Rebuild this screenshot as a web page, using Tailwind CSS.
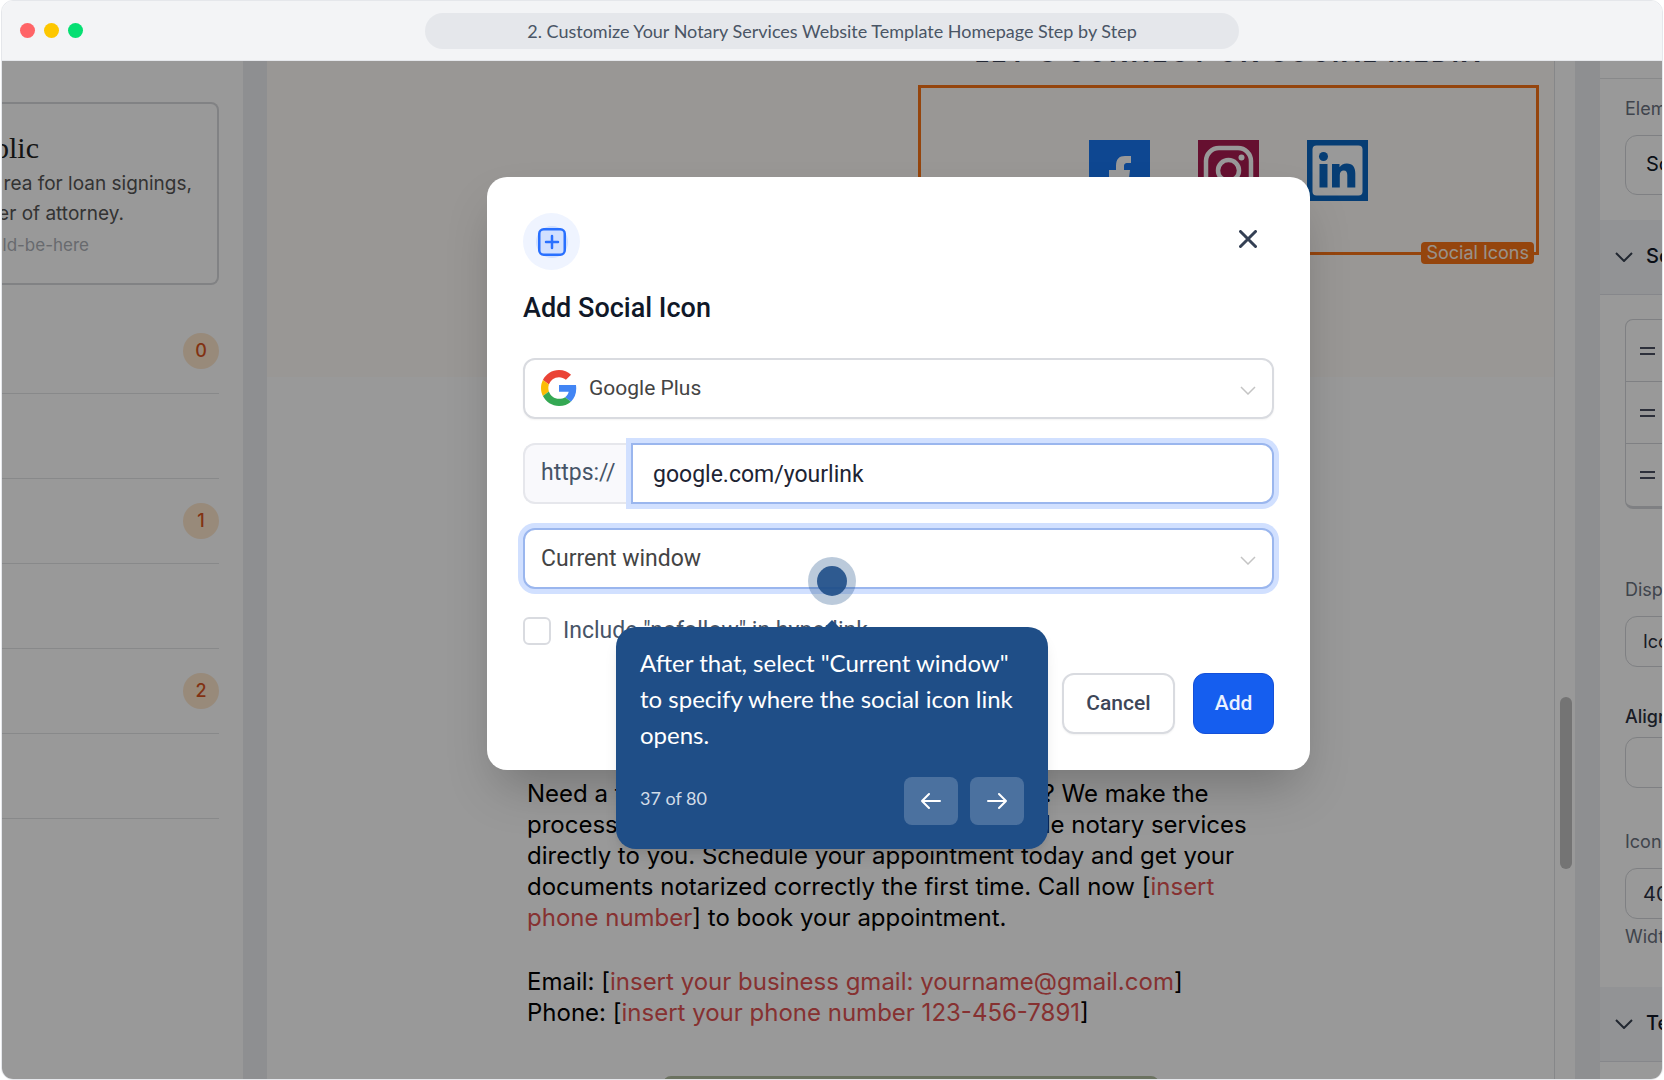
<!DOCTYPE html>
<html lang="en">
<head>
  <meta charset="UTF-8">
  <meta name="viewport" content="width=device-width, initial-scale=1.0">
  <title>Customize Your Notary Services Website Template</title>
  <script src="https://cdn.jsdelivr.net/npm/@tailwindcss/browser@4"></script>
</head>
<body class="h-screen bg-white px-px font-['Inter',sans-serif]">
  <div class="h-full flex flex-col rounded-xl border border-gray-200 overflow-hidden">

    <!-- Window bar -->
    <header class="relative h-[60px] shrink-0 flex items-center justify-center bg-gray-100 border-b border-gray-200">
      <div class="absolute left-[18px] flex gap-[9px]">
        <span class="size-[15px] rounded-full bg-[#ff6467]"></span>
        <span class="size-[15px] rounded-full bg-[#fdc700]"></span>
        <span class="size-[15px] rounded-full bg-[#05df72]"></span>
      </div>
      <div class="w-[49%] h-9 rounded-full bg-gray-200 flex items-center justify-center font-['Lato',sans-serif] text-lg text-gray-600">2. Customize Your Notary Services Website Template Homepage Step by Step</div>
    </header>

    <main class="relative flex-1 min-h-0 flex overflow-hidden bg-white">

      <!-- Left panel -->
      <aside class="w-[241px] shrink-0 overflow-hidden">
        <div class="mt-[41px] mr-6 h-[183px] pt-7 border-2 border-l-0 border-[#d8d9dc] rounded-r-lg overflow-hidden whitespace-nowrap">
          <div class="w-[37px] flex justify-end font-['Liberation_Serif',serif] text-[30px] leading-[32px] text-[#222]">Public</div>
          <div class="w-[190px] mt-[5px] flex justify-end text-[19px] leading-[30px] text-[#555]">rea for loan signings,</div>
          <div class="w-[122px] flex justify-end text-[19px] leading-[30px] text-[#555]">er of attorney.</div>
          <div class="w-[87px] mt-[3px] flex justify-end text-[17px] leading-[26px] text-[#adb1b8]">ld-be-here</div>
        </div>
        <ul class="mt-6 mr-6 text-lg font-medium text-[#d9541e]">
          <li class="h-[85px] border-b border-[#e3e4e6] flex items-center justify-end"><span class="size-9 rounded-full bg-[#fde6cc] flex items-center justify-center">0</span></li>
          <li class="h-[85px] border-b border-[#e3e4e6]"></li>
          <li class="h-[85px] border-b border-[#e3e4e6] flex items-center justify-end"><span class="size-9 rounded-full bg-[#fde6cc] flex items-center justify-center">1</span></li>
          <li class="h-[85px] border-b border-[#e3e4e6]"></li>
          <li class="h-[85px] border-b border-[#e3e4e6] flex items-center justify-end"><span class="size-9 rounded-full bg-[#fde6cc] flex items-center justify-center">2</span></li>
          <li class="h-[85px] border-b border-[#e3e4e6]"></li>
        </ul>
      </aside>
      <div class="w-6 shrink-0 bg-[#edeff2]"></div>

      <!-- Page preview -->
      <section class="flex-1 min-w-0 border-r border-[#e0e1e4] overflow-hidden">
        <div class="h-[316px] bg-[#fffcf8] flex justify-end pr-[15px]">
          <div class="w-[621px]">
            <h2 class="-mt-5 h-[44px] leading-[24px] text-center whitespace-nowrap text-[25px] font-bold tracking-widest text-[#3b4358]">LET'S CONNECT ON SOCIAL MEDIA</h2>
            <div class="relative h-[170px] border-3 border-[#f97316] flex justify-center gap-12 pt-[52px]">
              <svg class="size-[61px]" viewBox="0 0 61 61"><path fill="#1877f2" d="M0 0h61v61H0z"/><path fill="#fff" d="M27 61V38h-7v-8h7v-4c0-7 3-10 9-10h6v7h-3c-4 0-4 2-4 4v3h6l-1 8h-5v23z"/></svg>
              <svg class="size-[61px]" viewBox="0 0 61 61" fill="none" stroke="#fff"><path fill="#aa1c50" stroke="none" d="M0 0h61v61H0z"/><rect x="8" y="8" width="45" height="45" rx="13" stroke-width="4.500"/><circle cx="30.500" cy="30.500" r="10.500" stroke-width="4.500"/><circle cx="43.500" cy="17.500" r="3" fill="#fff" stroke="none"/></svg>
              <svg class="size-[61px]" viewBox="0 0 61 61"><path fill="#0a66c2" d="M0 0h61v61H0z"/><rect x="5.500" y="5.500" width="50" height="50" rx="4" fill="#fff"/><g fill="#0a66c2"><circle cx="16.500" cy="16.500" r="4.500"/><path d="M12.500 24h8v23.500h-8zM25 24h7.500v3.300c1.500-2.500 4-3.900 7.300-3.900 6.200 0 8.500 4 8.500 10.200v13.900h-8V35.200c0-3-1-4.800-3.500-4.800-2.700 0-4 1.800-4 4.900v12.200H25z"/></g></svg>
              <span class="absolute right-[2px] -bottom-3 h-[22px] px-[5px] rounded bg-[#f97316] text-[#fff3e6] text-lg leading-[22px]">Social Icons</span>
            </div>
          </div>
        </div>

        <div class="pl-[260px] pt-[401px] text-2xl leading-[31px] text-black whitespace-nowrap">
          <p>Need a trustworthy notary in your nearby city? We make the<br>process so simple from our professional mobile notary services<br>directly to you. Schedule your appointment today and get your<br>documents notarized correctly the first time. Call now [<span class="text-[#e05252]">insert</span><br><span class="text-[#e05252]">phone number</span>] to book your appointment.</p>
          <p class="mt-[33px]">Email: [<span class="text-[#e05252]">insert your business gmail: yourname@gmail.com</span>]<br>Phone: [<span class="text-[#e05252]">insert your phone number 123-456-7891</span>]</p>
        </div>
        <div class="mx-auto mt-12 w-[496px] h-16 rounded-lg bg-[#b2bfa0]"></div>
      </section>

      <!-- Scrollbar -->
      <div class="w-5 shrink-0 pt-[636px] pl-[5px]">
        <div class="w-3 h-[172px] rounded-full bg-[#c1c1c1]"></div>
      </div>
      <div class="w-[25px] shrink-0 bg-[#edeff2]"></div>

      <!-- Settings panel -->
      <aside class="w-[62px] shrink-0 overflow-hidden">
        <div class="w-[320px] pt-[17px] text-lg">
          <div class="border-t border-[#e3e4e6] px-[25px] pt-[19px] h-[142px]">
            <label for="element" class="block h-[22px] leading-[22px] text-[#6b7280]">Element</label>
            <select id="element" class="appearance-none mt-[15px] w-full h-[60px] pl-5 rounded-xl border border-[#d4d6da] bg-white text-[20px] text-[#111827]"><option>Social Icons</option></select>
          </div>
          <h3 class="h-[75px] pl-[15px] flex items-center gap-[13px] bg-[#f3f5f9] border-b border-[#dfe2e8] text-[20px] font-medium text-[#111827]">
            <svg class="w-[18px] h-[10px]" viewBox="0 0 18 10" fill="none" stroke="#374151" stroke-width="2"><path d="M1 1l8 8 8-8"/></svg>Social Icons
          </h3>
          <ul class="mx-[25px] mt-6 rounded-lg border border-b-3 border-[#d4d6da] overflow-hidden">
            <li class="h-[62px] pl-[14px] flex items-center border-b border-[#d4d6da]"><svg class="w-[15px] h-2" viewBox="0 0 15 8" stroke="#4b5063" stroke-width="2"><path d="M0 1h15M0 7h15"/></svg></li>
            <li class="h-[62px] pl-[14px] flex items-center border-b border-[#d4d6da]"><svg class="w-[15px] h-2" viewBox="0 0 15 8" stroke="#4b5063" stroke-width="2"><path d="M0 1h15M0 7h15"/></svg></li>
            <li class="h-[62px] pl-[14px] flex items-center"><svg class="w-[15px] h-2" viewBox="0 0 15 8" stroke="#4b5063" stroke-width="2"><path d="M0 1h15M0 7h15"/></svg></li>
          </ul>
          <div class="px-[25px] pt-[70px] h-[478px]">
            <label for="display" class="block h-[22px] leading-[22px] text-[#6b7280]">Display</label>
            <select id="display" class="appearance-none mt-[15px] w-full h-[51px] pl-[17px] rounded-xl border border-[#d4d6da] bg-white text-[#2b3040]"><option>Icons</option></select>
            <label for="align" class="block mt-[39px] h-[22px] leading-[22px] font-medium text-[#2b3040]">Alignment</label>
            <button id="align" type="button" class="block mt-[9px] w-full h-[51px] rounded-xl border border-[#d4d6da]"></button>
            <label for="width" class="block mt-[43px] h-[22px] leading-[22px] text-[#6b7280]">Icon size</label>
            <input id="width" value="40" class="block mt-[15px] w-full h-[51px] pl-[17px] rounded-xl border border-[#d4d6da] text-[20px] text-[#2b3040]">
            <p class="mt-[7px] leading-[22px] text-[#6b7280]">Width</p>
          </div>
          <h3 class="h-[75px] pl-[15px] flex items-center gap-[13px] bg-[#f3f5f9] border-b border-[#dfe2e8] text-[20px] font-medium text-[#111827]">
            <svg class="w-[18px] h-[10px]" viewBox="0 0 18 10" fill="none" stroke="#374151" stroke-width="2"><path d="M1 1l8 8 8-8"/></svg>Text
          </h3>
        </div>
      </aside>

      <!-- Modal -->
      <div class="absolute inset-0 bg-black/40 flex items-start justify-center pl-[133px] pt-[116px] font-['Roboto',sans-serif]">
        <form class="w-[823px] px-9 pt-9 pb-9 rounded-[20px] bg-white shadow-2xl">
          <div class="flex justify-between">
            <div class="size-[57px] rounded-full bg-[#eff4ff] flex items-center justify-center">
              <span class="size-8 rounded-full bg-[#d1e0ff] flex items-center justify-center">
                <svg class="size-7 shrink-0" viewBox="0 0 28 28" fill="none" stroke="#2970ff" stroke-width="2.500" stroke-linecap="round"><rect x="1.250" y="1.250" width="25.500" height="25.500" rx="4.500"/><path d="M14 8v12M8 14h12"/></svg>
              </span>
            </div>
            <button type="button" aria-label="Close" class="size-6 mt-[14px] mr-[14px] flex items-center justify-center">
              <svg class="size-[18px]" viewBox="0 0 18 18" fill="none" stroke="#344054" stroke-width="3" stroke-linecap="round"><path d="M1.500 1.500l15 15M16.500 1.500l-15 15"/></svg>
            </button>
          </div>
          <h1 class="mt-[22px] text-[27px] leading-8 font-medium text-[#101828]">Add Social Icon</h1>

          <div class="relative mt-[34px]">
            <svg class="absolute left-[18px] top-3 size-9" viewBox="0 0 48 48"><path fill="#EA4335" d="M24 9.500c3.540 0 6.710 1.220 9.210 3.600l6.850-6.850C35.900 2.380 30.470 0 24 0 14.620 0 6.510 5.380 2.560 13.220l7.980 6.190C12.430 13.720 17.740 9.500 24 9.500z"/><path fill="#4285F4" d="M46.980 24.550c0-1.570-.15-3.090-.38-4.550H24v9.020h12.940c-.58 2.960-2.260 5.480-4.780 7.180l7.730 6c4.510-4.180 7.090-10.360 7.090-17.650z"/><path fill="#FBBC05" d="M10.530 28.590c-.48-1.450-.76-2.990-.76-4.590s.27-3.140.76-4.590l-7.980-6.190C.92 16.460 0 20.120 0 24c0 3.880.92 7.540 2.560 10.780l7.970-6.190z"/><path fill="#34A853" d="M24 48c6.480 0 11.930-2.130 15.890-5.810l-7.730-6c-2.150 1.450-4.920 2.300-8.160 2.300-6.260 0-11.570-4.220-13.470-9.910l-7.980 6.190C6.510 42.620 14.620 48 24 48z"/></svg>
            <select aria-label="Network" class="appearance-none block w-full h-[61px] pl-16 rounded-xl border-2 border-[#d9dbe0] bg-transparent shadow-xs text-[21px] text-[#444]"><option>Google Plus</option></select>
            <svg class="absolute right-[18px] top-7 w-4 h-[9px]" viewBox="0 0 16 9" fill="none" stroke="#c4c4c4" stroke-width="1.500"><path d="M1 1l7 7 7-7"/></svg>
          </div>

          <div class="mt-6 flex">
            <label for="link" class="w-[108px] h-[61px] pl-4 flex items-center rounded-l-xl border-2 border-r-0 border-[#e6e7ec] bg-[#f9f9fc] text-[23px] text-[#475467]">https://</label>
            <input id="link" type="text" value="google.com/yourlink" class="flex-1 h-[61px] pl-5 pt-[2px] rounded-r-xl border-2 border-[#9ab6ee] ring-[5px] ring-[#d1e0ff] bg-white text-[23px] text-[#1d2433]">
          </div>

          <div class="relative mt-6">
            <select aria-label="Open link in" class="appearance-none block w-full h-[61px] pl-4 pt-[2px] rounded-xl border-2 border-[#9ab6ee] ring-[5px] ring-[#d1e0ff] bg-white text-[23px] text-[#444]"><option>Current window</option></select>
            <svg class="absolute right-[18px] top-7 w-4 h-[9px]" viewBox="0 0 16 9" fill="none" stroke="#c4c4c4" stroke-width="1.500"><path d="M1 1l7 7 7-7"/></svg>
          </div>

          <div class="mt-7 flex items-center gap-3 text-[23px] leading-7 text-[#475467]">
            <input id="nofollow" type="checkbox" class="appearance-none size-7 rounded-md border-2 border-[#d9dbe0]">
            <label for="nofollow">Include "nofollow" in hyperlink</label>
          </div>

          <div class="mt-7 flex justify-end gap-[18px] text-[21px] font-medium">
            <button type="button" class="w-[113px] h-[61px] rounded-xl border-2 border-[#d9dbe0] text-[#3d4658] shadow-xs">Cancel</button>
            <button type="button" class="w-[81px] h-[61px] rounded-xl border border-[#1550d8] bg-[#155eef] text-[#eaf1ff]">Add</button>
          </div>
        </form>
      </div>

      <!-- Tour hotspot and tooltip -->
      <div class="absolute inset-x-0 top-[496px] flex flex-col items-center font-['Lato',sans-serif]">
        <span class="size-12 rounded-full bg-[#1f4e87]/30 flex items-center justify-center">
          <span class="size-[30px] rounded-full bg-[#1f4e87]/90"></span>
        </span>
        <svg class="mt-[15px] w-[14px] h-[7px]" viewBox="0 0 14 7"><path fill="#1f4e87" d="M0 7l7-7 7 7z"/></svg>
        <div class="w-[432px] px-6 pt-[18px] pb-6 rounded-[20px] bg-[#1f4e87] text-white shadow-lg">
          <p class="text-2xl leading-9">After that, select "Current window" to specify where the social icon link opens.</p>
          <div class="mt-6 flex items-start justify-between">
            <span class="text-lg leading-[42px] text-[#d2dce7]">37 of 80</span>
            <div class="flex gap-3">
              <button type="button" aria-label="Previous" class="w-[54px] h-12 rounded-lg bg-white/20 flex items-center justify-center">
                <svg class="w-5 h-[18px]" viewBox="0 0 20 18" fill="none" stroke="#fff" stroke-width="2" stroke-linecap="round" stroke-linejoin="round"><path d="M19 9H1M8 2L1 9l7 7"/></svg>
              </button>
              <button type="button" aria-label="Next" class="w-[54px] h-12 rounded-lg bg-white/20 flex items-center justify-center">
                <svg class="w-5 h-[18px]" viewBox="0 0 20 18" fill="none" stroke="#fff" stroke-width="2" stroke-linecap="round" stroke-linejoin="round"><path d="M1 9h18M12 2l7 7-7 7"/></svg>
              </button>
            </div>
          </div>
        </div>
      </div>
    </main>
  </div>
</body>
</html>
